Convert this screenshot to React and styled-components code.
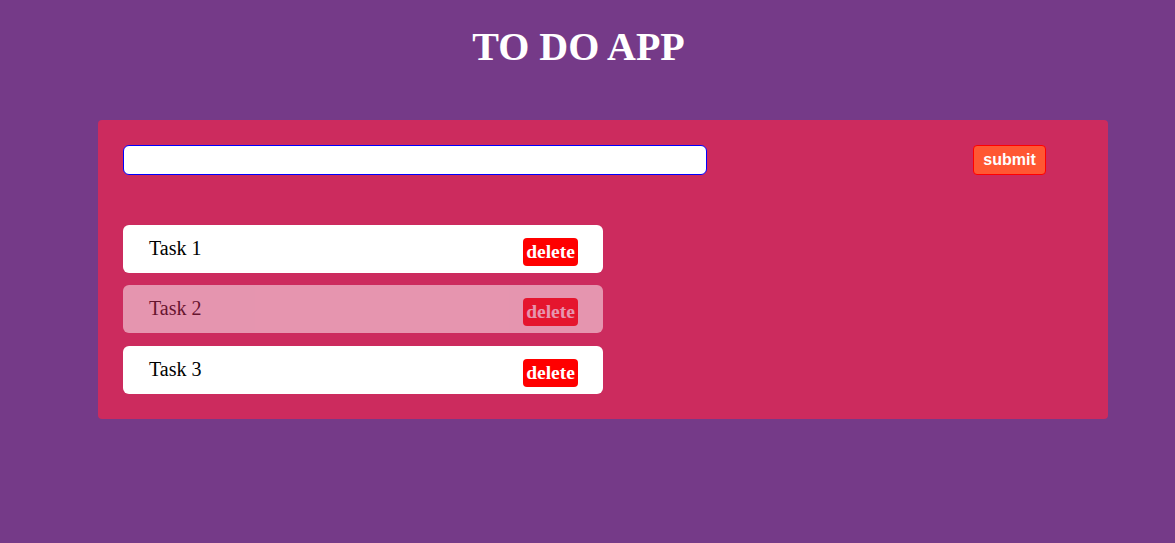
import React from "react";
import styled, { createGlobalStyle } from "styled-components";

const Global = createGlobalStyle`
  html, body { margin: 0; padding: 0; }
  body {
    background: #753a88;
    font-family: "Liberation Serif", "Times New Roman", serif;
    min-height: 543px;
  }
`;

const Page = styled.div`
  padding: 8px 8px 0 8px;
`;

const Title = styled.h1`
  margin: 16px 0 0 0;
  padding-right: 18px;
  text-align: center;
  color: #ffffff;
  font-size: 40px;
  font-weight: bold;
  line-height: 46px;
`;

const Card = styled.div`
  margin: 50px 0 0 90px;
  width: 1010px;
  box-sizing: border-box;
  background: #cc2b5e;
  border-radius: 4px;
  padding: 25px;
`;

const Form = styled.form`
  display: flex;
  align-items: center;
  margin: 0 0 50px 0;
`;

const Input = styled.input`
  width: 584px;
  height: 30px;
  box-sizing: border-box;
  border: 1px solid #0000ff;
  border-radius: 6px;
  background: #ffffff;
  outline: none;
  padding: 0 8px;
`;

const Submit = styled.button`
  margin-left: 266px;
  width: 73px;
  height: 30px;
  box-sizing: border-box;
  background: #ff5733;
  border: 1px solid #ff0000;
  border-radius: 4px;
  color: #ffffff;
  font-family: "Liberation Sans", Arial, sans-serif;
  font-weight: bold;
  font-size: 16px;
  padding: 0;
`;

const List = styled.ul`
  list-style: none;
  margin: 0;
  padding: 0;
  display: flex;
  flex-direction: column;
  gap: 12px;
`;

const Item = styled.li`
  width: 480px;
  height: 48px;
  box-sizing: border-box;
  background: #ffffff;
  border-radius: 6px;
  display: flex;
  align-items: center;
  justify-content: space-between;
  padding: 0 25px 0 26px;
  opacity: ${(p) => (p.$done ? 0.5 : 1)};
  margin-top: ${(p) => (p.$extra ? "1px" : "0")};
`;

const TaskText = styled.span`
  color: #000000;
  font-size: 20px;
  line-height: 24px;
  margin-top: -2px;
`;

const Delete = styled.button`
  width: 55px;
  height: 28px;
  box-sizing: border-box;
  background: #ff0000;
  border: none;
  border-radius: 4px;
  color: #ffffff;
  font-family: "Liberation Serif", "Times New Roman", serif;
  font-weight: bold;
  font-size: 19.5px;
  padding: 0;
  margin-top: 6px;
`;

const tasks = [
  { id: 1, text: "Task 1", done: false },
  { id: 2, text: "Task 2", done: true },
  { id: 3, text: "Task 3", done: false },
];

export default function App() {
  return (
    <>
      <Global />
      <Page>
        <Title>TO DO APP</Title>
        <Card>
          <Form onSubmit={(e) => e.preventDefault()}>
            <Input type="text" />
            <Submit type="submit">submit</Submit>
          </Form>
          <List>
            {tasks.map((t, i) => (
              <Item key={t.id} $done={t.done} $extra={i === 2}>
                <TaskText>{t.text}</TaskText>
                <Delete>delete</Delete>
              </Item>
            ))}
          </List>
        </Card>
      </Page>
    </>
  );
}
